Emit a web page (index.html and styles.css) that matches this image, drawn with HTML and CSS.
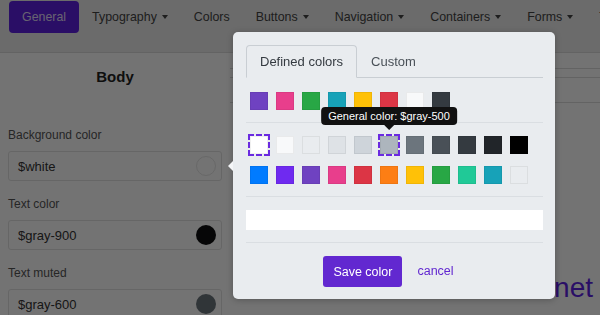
FILE: index.html
```html
<!DOCTYPE html>
<html lang="en">
<head>
<meta charset="utf-8">
<title>Theme editor</title>
<link rel="stylesheet" href="styles.css">
</head>
<body>
<nav class="topnav">
  <a class="nav-link active">General</a>
  <a class="nav-link">Typography<span class="caret"></span></a>
  <a class="nav-link">Colors</a>
  <a class="nav-link">Buttons<span class="caret"></span></a>
  <a class="nav-link">Navigation<span class="caret"></span></a>
  <a class="nav-link">Containers<span class="caret"></span></a>
  <a class="nav-link">Forms<span class="caret"></span></a>
  <a class="nav-link">Tables</a>
</nav>
<main class="layout">
  <aside class="sidebar">
    <h2 class="side-title">Body</h2>
    <div class="field">
      <label class="field-label">Background color</label>
      <div class="color-input"><span>$white</span><span class="dot dot-white"></span></div>
    </div>
    <div class="field">
      <label class="field-label">Text color</label>
      <div class="color-input"><span>$gray-900</span><span class="dot dot-dark"></span></div>
    </div>
    <div class="field">
      <label class="field-label">Text muted</label>
      <div class="color-input"><span>$gray-600</span><span class="dot dot-muted"></span></div>
    </div>
  </aside>
  <section class="preview">
    <div class="strip strip-a"></div>
    <div class="strip strip-b"></div>
    <div class="strip strip-c"></div>
    <h1 class="preview-title">internet</h1>
  </section>
</main>
<div class="backdrop"></div>
<div class="popover">
  <span class="popover-arrow"></span>
  <ul class="tabs">
    <li class="tab active">Defined colors</li>
    <li class="tab">Custom</li>
  </ul>
  <div class="pane pane-top">
    <div class="swatch-row">
      <span class="swatch" style="background:#6f42c1"></span>
      <span class="swatch" style="background:#e83e8c"></span>
      <span class="swatch" style="background:#28a745"></span>
      <span class="swatch" style="background:#17a2b8"></span>
      <span class="swatch" style="background:#ffc107"></span>
      <span class="swatch" style="background:#dc3545"></span>
      <span class="swatch" style="background:#f8f9fa"></span>
      <span class="swatch" style="background:#343a40"></span>
    </div>
  </div>
  <div class="pane">
    <div class="swatch-row">
      <span class="swatch selected" style="background:#ffffff"></span>
      <span class="swatch" style="background:#f8f9fa"></span>
      <span class="swatch" style="background:#e9ecef"></span>
      <span class="swatch" style="background:#dee2e6"></span>
      <span class="swatch" style="background:#ced4da"></span>
      <span class="swatch selected tipped" style="background:#adb5bd"><span class="tooltip">General color: $gray-500</span></span>
      <span class="swatch" style="background:#6c757d"></span>
      <span class="swatch" style="background:#495057"></span>
      <span class="swatch" style="background:#343a40"></span>
      <span class="swatch" style="background:#212529"></span>
      <span class="swatch" style="background:#000000"></span>
    </div>
    <div class="swatch-row">
      <span class="swatch" style="background:#007bff"></span>
      <span class="swatch" style="background:#6f2af0"></span>
      <span class="swatch" style="background:#6f42c1"></span>
      <span class="swatch" style="background:#e83e8c"></span>
      <span class="swatch" style="background:#dc3545"></span>
      <span class="swatch" style="background:#fd7e14"></span>
      <span class="swatch" style="background:#ffc107"></span>
      <span class="swatch" style="background:#28a745"></span>
      <span class="swatch" style="background:#20c997"></span>
      <span class="swatch" style="background:#17a2b8"></span>
      <span class="swatch" style="background:#e9ecef"></span>
    </div>
  </div>
  <div class="pane">
    <div class="text-input"></div>
  </div>
  <div class="pane pane-actions">
    <button class="btn-save">Save color</button>
    <a class="btn-cancel">cancel</a>
  </div>
</div>
</body>
</html>
```
FILE: styles.css
```css
* { box-sizing: border-box; }
html, body { margin: 0; padding: 0; }
body {
  width: 600px;
  height: 315px;
  overflow: hidden;
  background: #ffffff;
  font-family: "Liberation Sans", Arial, sans-serif;
  color: #333;
}

.topnav {
  display: flex;
  align-items: flex-start;
  height: 53px;
  padding: 1px 9px 0;
  background: #ededed;
  border-bottom: 1px solid #dcdcdc;
  white-space: nowrap;
  overflow: hidden;
}
.nav-link {
  display: flex;
  align-items: center;
  height: 32px;
  padding: 0 13px;
  font-size: 12.4px;
  color: #444;
  border-radius: 4px;
}
.nav-link.active {
  background: #5d1fe3;
  color: #e4dcfa;
}
.caret {
  display: inline-block;
  margin-left: 5px;
  border-top: 4px solid #444;
  border-left: 3.5px solid transparent;
  border-right: 3.5px solid transparent;
}

.layout {
  display: grid;
  grid-template-columns: 230px 1fr;
}
.sidebar {
  padding: 0 8px;
}
.side-title {
  margin: 15px 0 41px;
  font-size: 15px;
  line-height: 18px;
  font-weight: bold;
  text-align: center;
  color: #222;
}
.field { margin-bottom: 15px; }
.field-label {
  display: block;
  margin-bottom: 7px;
  font-size: 12px;
  line-height: 17px;
  color: #555;
}
.color-input {
  display: flex;
  align-items: center;
  justify-content: space-between;
  height: 30px;
  padding: 0 5px 0 9px;
  border: 1px solid #e2e2e2;
  border-radius: 3px;
  background: #fff;
  font-size: 13px;
  color: #333;
}
.dot {
  width: 20px;
  height: 20px;
  border-radius: 50%;
}
.dot-white { background: #fff; border: 1px solid #e6e6e6; }
.dot-dark { background: #0e0f11; }
.dot-muted { background: #6c757d; }

.preview {
  display: flex;
  flex-direction: column;
  overflow: hidden;
}
.strip { border-bottom: 1px solid #dcdcdc; }
.strip-a { height: 16px; }
.strip-b { height: 9px; }
.strip-c { height: 25px; }
.preview-title {
  margin: 168px 0 0;
  padding-right: 7px;
  font-size: 28px;
  line-height: 34px;
  font-weight: normal;
  text-align: right;
  color: #5d1fe3;
  white-space: nowrap;
}

.backdrop {
  position: fixed;
  inset: 0;
  background: rgba(0, 0, 0, 0.55);
  z-index: 1;
}

.popover {
  position: absolute;
  left: 233px;
  top: 32px;
  width: 322px;
  padding: 13px 12px 0 13px;
  background: #e9ecef;
  border-radius: 5px;
  box-shadow: 0 1px 6px rgba(0, 0, 0, 0.25);
  z-index: 2;
}
.popover-arrow {
  position: absolute;
  left: -5px;
  top: 129px;
  border-right: 5px solid #f4f5f7;
  border-top: 5px solid transparent;
  border-bottom: 5px solid transparent;
}
.tabs {
  display: flex;
  margin: 0;
  padding: 0;
  list-style: none;
  border-bottom: 1px solid #c9ced3;
}
.tab {
  height: 32px;
  margin-bottom: -1px;
  padding: 0 13px;
  line-height: 32px;
  font-size: 13px;
  color: #495057;
  border: 1px solid transparent;
  border-radius: 4px 4px 0 0;
}
.tab.active {
  height: 33px;
  border-color: #c9ced3 #c9ced3 #e9ecef;
  background: #e9ecef;
  color: #343a40;
}
.pane {
  display: flex;
  flex-direction: column;
  gap: 12px;
  padding: 13px 0 12px;
  border-top: 1px solid #dadee2;
}
.pane-top {
  padding-top: 14px;
  border-top: 0;
}
.swatch-row {
  display: flex;
  gap: 8px;
  padding-left: 4px;
}
.swatch {
  width: 18px;
  height: 18px;
  border: 1px solid rgba(0, 0, 0, 0.06);
}
.swatch.selected {
  outline: 2px dashed #6a2ae0;
  outline-offset: 0;
}
.tipped { position: relative; }
.tooltip {
  position: absolute;
  left: 50%;
  bottom: 28px;
  transform: translateX(-50%);
  height: 18px;
  padding: 0 7px;
  line-height: 18px;
  font-size: 11px;
  color: #fff;
  background: #111;
  border-radius: 4px;
  white-space: nowrap;
}
.tooltip::after {
  content: "";
  position: absolute;
  left: 50%;
  top: 100%;
  margin-left: -5px;
  border-top: 5px solid #111;
  border-left: 5px solid transparent;
  border-right: 5px solid transparent;
}
.text-input {
  height: 20px;
  background: #fff;
}
.pane-actions {
  flex-direction: row;
  justify-content: center;
  align-items: center;
  gap: 3px;
  padding-bottom: 12px;
}
.btn-save {
  height: 31px;
  padding: 0 10px;
  border: 0;
  border-radius: 3px;
  background: #6228d0;
  color: #fff;
  font-family: inherit;
  font-size: 12.5px;
}
.btn-cancel {
  padding: 0 12px;
  line-height: 31px;
  font-size: 12.5px;
  color: #6228d0;
}
```
